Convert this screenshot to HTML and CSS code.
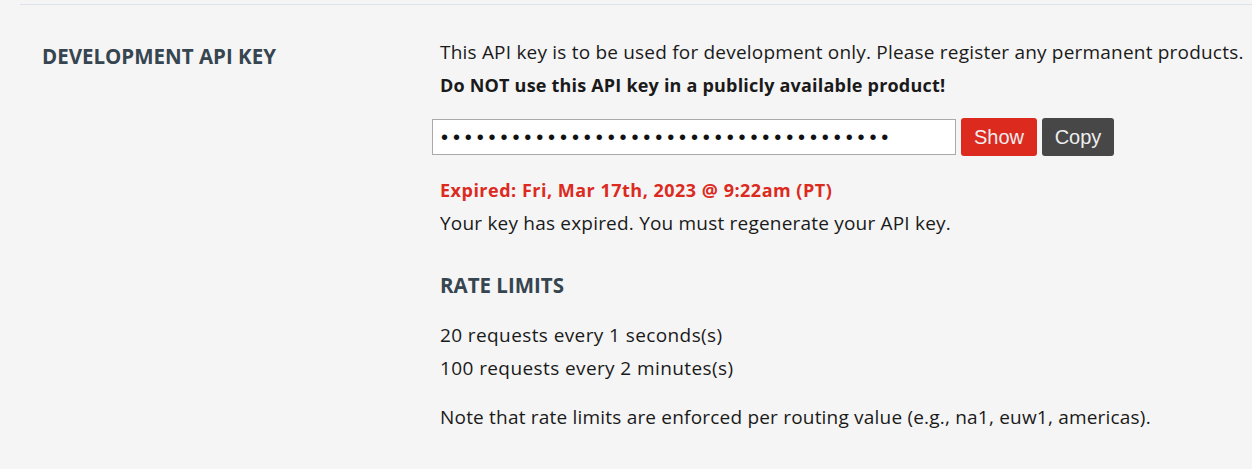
FILE: index.html
```html
<!DOCTYPE html>
<html lang="en">
<head>
    <meta charset="UTF-8">
    <title>Development API Key</title>
    <link rel="stylesheet" href="styles.css">
</head>
<body>
    <div class="section">
        <h2 class="section-title">DEVELOPMENT API KEY</h2>
        <div class="section-body">
            <p class="intro">This API key is to be used for development only. Please register any permanent products.</p>
            <p class="warning">Do NOT use this API key in a publicly available product!</p>
            <div class="key-row">
                <input type="password" class="key-input" value="RGAPI-00000000000000000000000000000000" readonly>
                <button class="btn btn-show">Show</button>
                <button class="btn btn-copy">Copy</button>
            </div>
            <p class="expired">Expired: Fri, Mar 17th, 2023 @ 9:22am (PT)</p>
            <p class="expired-note">Your key has expired. You must regenerate your API key.</p>

            <h3 class="sub-title">RATE LIMITS</h3>
            <div class="limits">
                <p>20 requests every 1 seconds(s)</p>
                <p>100 requests every 2 minutes(s)</p>
            </div>
            <p class="note">Note that rate limits are enforced per routing value (e.g., na1, euw1, americas).</p>
        </div>
    </div>
</body>
</html>
```
FILE: styles.css
```css
body {
    margin: 0;
    background-color: #f5f5f5;
    font-family: "Open Sans", sans-serif;
    color: #1a1a1a;
}
.section {
    display: flex;
    margin-left: 20px;
    border-top: 1px solid #dde3e8;
    margin-top: 4px;
    padding-top: 38px;
}
.section-title {
    width: 398px;
    margin: 0 0 0 22px;
    font-size: 20.5px;
    font-weight: 700;
    color: #36454f;
    line-height: 26px;
}
.section-body {
    font-size: 19px;
    letter-spacing: 0.2px;
}
.section-body p {
    margin: 0;
    line-height: 33px;
}
.intro {
    margin-top: -7px !important;
}
.warning {
    font-size: 18px;
    font-weight: 700;
}
.key-row {
    display: flex;
    align-items: center;
    margin: 16px 0 18px -8px;
}
.key-input {
    width: 524px;
    height: 36px;
    box-sizing: border-box;
    border: 1px solid #a9a9a9;
    background: #fff;
    padding: 0 8px;
    font-size: 20px;
    letter-spacing: 4.9px;
    color: #111;
}
.btn {
    height: 38px;
    margin-left: 5px;
    border: none;
    border-radius: 3px;
    color: #eee;
    font-family: "Liberation Sans", sans-serif;
    font-size: 20px;
    padding: 0 10px;
    letter-spacing: 0;
}
.btn-show {
    background-color: #dc2a1f;
    width: 76px;
}
.btn-copy {
    background-color: #474747;
    width: 72px;
}
.expired {
    color: #dc2a1f;
    font-size: 18px;
    font-weight: 700;
    letter-spacing: 0.5px;
}
.sub-title {
    margin: 31px 0 20px;
    font-size: 20.5px;
    letter-spacing: 0;
    color: #36454f;
}
.limits {
    margin-bottom: 16px;
    letter-spacing: 0.4px;
}
```
